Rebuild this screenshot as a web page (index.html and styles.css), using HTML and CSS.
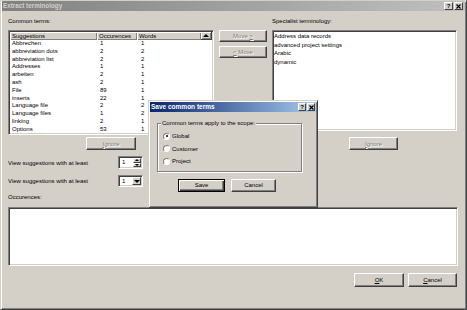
FILE: index.html
```html
<!DOCTYPE html>
<html lang="en">
<head>
<meta charset="UTF-8">
<title>Extract terminology</title>
<link rel="stylesheet" href="styles.css">
</head>
<body>

<div class="window">
  <div class="titlebar inactive">
    <span class="title">Extract terminology</span>
    <span class="cap-btns">
      <span class="cap-btn">?</span>
      <span class="cap-btn"><svg width="5" height="5" viewBox="0 0 5 5"><path d="M0.5 0.5L4.5 4.5M4.5 0.5L0.5 4.5" stroke="#000" stroke-width="1.2"/></svg></span>
    </span>
  </div>

  <div class="client">
    <div class="top">
      <div class="col">
        <div class="label">Common terms:</div>
        <div class="listview sunken">
          <div class="lv-header">
            <span class="hcell">Suggestions</span>
            <span class="hcell">Occurences</span>
            <span class="hcell">Words</span>
            <span class="hcell scroll-up"><i class="arrow-up"></i></span>
          </div>
          <div class="lv-row"><span>Abbrechen</span><span>1</span><span>1</span></div>
          <div class="lv-row"><span>abbreviation dots</span><span>2</span><span>2</span></div>
          <div class="lv-row"><span>abbreviation list</span><span>2</span><span>2</span></div>
          <div class="lv-row"><span>Addresses</span><span>1</span><span>1</span></div>
          <div class="lv-row"><span>arbeiten</span><span>2</span><span>1</span></div>
          <div class="lv-row"><span>ash</span><span>2</span><span>1</span></div>
          <div class="lv-row"><span>File</span><span>89</span><span>1</span></div>
          <div class="lv-row"><span>inserts</span><span>22</span><span>1</span></div>
          <div class="lv-row"><span>Language file</span><span>2</span><span>2</span></div>
          <div class="lv-row"><span>Language files</span><span>1</span><span>2</span></div>
          <div class="lv-row"><span>linking</span><span>2</span><span>1</span></div>
          <div class="lv-row"><span>Options</span><span>53</span><span>1</span></div>
        </div>
        <button class="btn disabled ignore-left"><u>I</u>gnore</button>
      </div>

      <div class="col col-mid">
        <button class="btn disabled">Move <u>&gt;</u></button>
        <button class="btn disabled"><u>&lt;</u> Move</button>
      </div>

      <div class="col">
        <div class="label">Specialist terminology:</div>
        <div class="listbox sunken">
          <div class="item">Address data records</div>
          <div class="item">advanced project settings</div>
          <div class="item">Arabic</div>
          <div class="item">dynamic</div>
        </div>
        <button class="btn disabled ignore-right"><u>I</u>gnore</button>
      </div>
    </div>

    <div class="view-row row-spin">
      <span class="view-label">View suggestions with at least</span>
      <span class="spin sunken">
        <span class="field">1</span>
        <span class="spin-btns">
          <span class="spin-btn"><i class="arrow-up small"></i></span>
          <span class="spin-btn"><i class="arrow-down small"></i></span>
        </span>
      </span>
      <span class="tick">.</span>
    </div>

    <div class="view-row row-combo">
      <span class="view-label">View suggestions with at least</span>
      <span class="combo sunken">
        <span class="field">1</span>
        <span class="drop-btn"><i class="arrow-down"></i></span>
      </span>
      <span class="tick">.</span>
    </div>

    <div class="occ-label">Occurences:</div>
    <div class="occ-box sunken"></div>

    <div class="footer">
      <button class="btn ok"><u>O</u>K</button>
      <button class="btn cancel"><u>C</u>ancel</button>
    </div>
  </div>

  <div class="dialog">
    <div class="titlebar active">
      <span class="title">Save common terms</span>
      <span class="cap-btns">
        <span class="cap-btn">?</span>
        <span class="cap-btn"><svg width="5" height="5" viewBox="0 0 5 5"><path d="M0.5 0.5L4.5 4.5M4.5 0.5L0.5 4.5" stroke="#000" stroke-width="1.2"/></svg></span>
      </span>
    </div>
    <div class="group">
      <span class="group-label">Common terms apply to the scope:</span>
      <label class="opt"><span class="radio checked"></span>Global</label>
      <label class="opt"><span class="radio"></span>Customer</label>
      <label class="opt"><span class="radio"></span>Project</label>
    </div>
    <div class="dlg-buttons">
      <button class="btn default save">Save</button>
      <button class="btn dlg-cancel">Cancel</button>
    </div>
  </div>
</div>

</body>
</html>
```

FILE: styles.css
```css
body {
    margin: 0;
    font-family: "Liberation Sans", Arial, sans-serif;
    font-size: 6px;
    color: #000;
    background: #fff;
}
.window {
    position: relative;
    width: 467px;
    height: 310px;
    box-sizing: border-box;
    background: #d4d0c8;
    border: 1px solid;
    border-color: #d4d0c8 #404040 #404040 #d4d0c8;
    box-shadow: inset 1px 1px #fff, inset -1px -1px #808080;
}

/* title bars */
.titlebar {
    height: 10px;
    margin: 0 1px;
    display: flex;
    align-items: center;
    justify-content: space-between;
    padding: 0 2px 0 1px;
}
.titlebar .title {
    font-weight: bold;
    font-size: 6.3px;
    line-height: 10px;
}
.titlebar.inactive {
    background: linear-gradient(90deg, #808080, #c0c0c0);
}
.titlebar.inactive .title { color: #d4d0c8; }
.titlebar.active {
    background: linear-gradient(90deg, #0a246a, #a6caf0);
}
.titlebar.active .title { color: #fff; }
.cap-btns {
    display: flex;
    gap: 1px;
}
.cap-btn {
    width: 9px;
    height: 8px;
    box-sizing: border-box;
    display: flex;
    align-items: center;
    justify-content: center;
    background: #d4d0c8;
    border: 1px solid;
    border-color: #fff #404040 #404040 #fff;
    font-weight: bold;
    font-size: 6px;
    line-height: 6px;
}

/* shared bits */
.sunken {
    box-sizing: border-box;
    border: 1px solid;
    border-color: #808080 #fff #fff #808080;
    box-shadow: inset 1px 1px #404040, inset -1px -1px #d4d0c8;
    padding: 1px;
    background: #fff;
}
.btn {
    display: block;
    box-sizing: border-box;
    margin: 0;
    padding: 0;
    font-family: inherit;
    font-size: 6px;
    line-height: 10px;
    color: #000;
    background: #d4d0c8;
    border: 1px solid;
    border-color: #fff #404040 #404040 #fff;
    box-shadow: inset -1px -1px #808080;
    text-align: center;
}
.btn.disabled {
    color: #808080;
    text-shadow: 1px 1px #fff;
}
.btn.default {
    border-color: #000;
    box-shadow: inset 1px 1px #fff, inset -1px -1px #404040, inset -2px -2px #808080;
}
.arrow-up, .arrow-down {
    display: block;
    width: 0;
    height: 0;
    border-left: 3px solid transparent;
    border-right: 3px solid transparent;
}
.arrow-up { border-bottom: 3px solid #000; }
.arrow-down { border-top: 3px solid #000; }
.arrow-up.small, .arrow-down.small {
    border-left-width: 2px;
    border-right-width: 2px;
}
.arrow-up.small { border-bottom-width: 2px; }
.arrow-down.small { border-top-width: 2px; }

/* main client area */
.client {
    width: 450px;
    padding: 6px 0 0 7px;
}
.top {
    display: grid;
    grid-template-columns: 206px 48px 185px;
    column-gap: 5px;
}
.label {
    height: 8px;
    line-height: 8px;
    margin-bottom: 5px;
}
.listview {
    height: 105px;
}
.lv-header {
    display: grid;
    grid-template-columns: 87px 40px 64px 11px;
    height: 8px;
}
.hcell {
    box-sizing: border-box;
    background: #d4d0c8;
    box-shadow: inset 1px 1px #fff, inset -1px -1px #808080;
    line-height: 8px;
    padding-left: 2px;
}
.scroll-up {
    display: flex;
    align-items: center;
    justify-content: center;
    padding: 0;
    border-right: 1px solid #404040;
    border-bottom: 1px solid #404040;
}
.lv-row {
    display: grid;
    grid-template-columns: 87px 40px 64px;
    height: 7.8px;
    line-height: 7.8px;
}
.lv-row span:nth-child(1) { padding-left: 2px; }
.lv-row span:nth-child(2) { padding-left: 3px; }
.lv-row span:nth-child(3) { padding-left: 4px; }
.ignore-left {
    margin: 2px 0 0 78px;
    width: 50px;
    height: 13px;
}
.col-mid {
    padding-top: 13px;
    display: flex;
    flex-direction: column;
    gap: 4px;
}
.col-mid .btn {
    width: 48px;
    height: 12px;
}
.listbox {
    height: 101px;
}
.listbox .item {
    height: 8.6px;
    line-height: 8.6px;
}
.ignore-right {
    margin: 6px 0 0 77px;
    width: 49px;
    height: 13px;
}

.view-row {
    display: flex;
    align-items: center;
}
.row-spin {
    height: 13px;
    margin-top: 6px;
}
.row-combo {
    height: 12px;
    margin-top: 6px;
}
.view-label {
    width: 110px;
}
.spin, .combo {
    display: flex;
    width: 25px;
    height: 100%;
}
.field {
    flex: 1;
    padding-left: 2px;
    line-height: 9px;
}
.spin-btns {
    display: flex;
    flex-direction: column;
    width: 8px;
}
.spin-btn, .drop-btn {
    box-sizing: border-box;
    display: flex;
    align-items: center;
    justify-content: center;
    background: #d4d0c8;
    border: 1px solid;
    border-color: #fff #404040 #404040 #fff;
}
.spin-btn { flex: 1; }
.drop-btn { width: 9px; }
.tick {
    margin-left: 4px;
    color: #555;
}

.occ-label {
    margin-top: 6px;
    height: 8px;
    line-height: 8px;
    margin-bottom: 6px;
}
.occ-box {
    height: 59px;
    width: 450px;
}
.footer {
    display: flex;
    justify-content: flex-end;
    gap: 4px;
    margin-top: 7px;
    padding-right: 1px;
}
.footer .btn {
    height: 14px;
    line-height: 12px;
}
.ok { width: 50px; }
.cancel { width: 49px; }

/* modal dialog */
.dialog {
    position: absolute;
    left: 147px;
    top: 99px;
    width: 170px;
    height: 108px;
    box-sizing: border-box;
    background: #d4d0c8;
    border: 1px solid;
    border-color: #d4d0c8 #404040 #404040 #d4d0c8;
    box-shadow: inset 1px 1px #fff, inset -1px -1px #808080;
    padding-top: 1px;
}
.dialog .titlebar {
    padding-right: 1px;
}
.dialog .title { font-size: 6.5px; }
.dialog .cap-btn { width: 8px; }
.group {
    position: relative;
    margin: 11px 0 0 8px;
    width: 145px;
    height: 49px;
    box-sizing: border-box;
    border: 1px solid #808080;
    box-shadow: 1px 1px #fff, inset 1px 1px #fff;
    padding: 6px 0 0 5px;
}
.group-label {
    position: absolute;
    top: -5px;
    left: 3px;
    padding: 0 1px;
    line-height: 8px;
    background: #d4d0c8;
}
.opt {
    display: flex;
    align-items: center;
    gap: 2px;
    height: 12.5px;
}
.radio {
    position: relative;
    width: 7px;
    height: 7px;
    box-sizing: border-box;
    border-radius: 50%;
    border: 1px solid;
    border-color: #808080 #fff #fff #808080;
    background: #fff;
}
.radio.checked::after {
    content: "";
    position: absolute;
    left: 1.5px;
    top: 1.5px;
    width: 2px;
    height: 2px;
    border-radius: 50%;
    background: #000;
}
.dlg-buttons {
    display: flex;
    gap: 6px;
    margin: 7px 0 0 29px;
}
.dlg-buttons .btn {
    height: 13px;
    line-height: 11px;
}
.save { width: 47px; }
.dlg-cancel { width: 45px; }
```
